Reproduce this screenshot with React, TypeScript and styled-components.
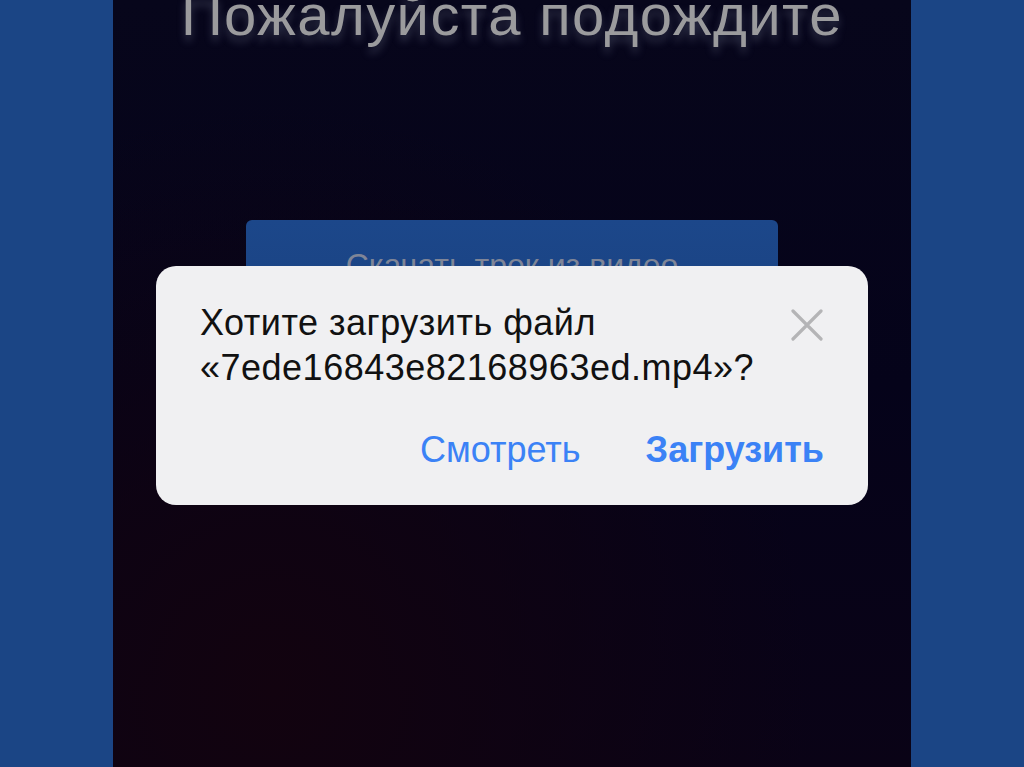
import React from "react";
import styled, { createGlobalStyle } from "styled-components";

const GlobalStyle = createGlobalStyle`
  html, body {
    margin: 0;
    padding: 0;
    background: #1b4585;
  }
`;

const Page = styled.div`
  width: 1024px;
  height: 767px;
  display: flex;
  justify-content: center;
  background: #1b4585;
  overflow: hidden;
`;

const Screen = styled.div`
  position: relative;
  width: 798px;
  height: 767px;
  display: flex;
  flex-direction: column;
  align-items: center;
  background: radial-gradient(
      ellipse at 20% 90%,
      #12030f 0%,
      rgba(18, 3, 15, 0) 60%
    ),
    linear-gradient(180deg, #07061b 0%, #05031a 50%, #0a0316 100%);
`;

const Title = styled.h1`
  margin: -18px 0 0;
  font-family: "Liberation Sans", Arial, sans-serif;
  font-weight: 400;
  font-size: 58px;
  line-height: 66px;
  letter-spacing: 1.4px;
  color: #9b9b9d;
  text-shadow: 0 6px 9px rgba(150, 160, 190, 0.3);
  white-space: nowrap;
`;

const ActionButton = styled.div`
  margin-top: 172px;
  width: 532px;
  height: 110px;
  box-sizing: border-box;
  padding-top: 27px;
  border-radius: 6px;
  background: linear-gradient(180deg, #1c478a 0%, #1a4281 100%);
  text-align: center;
  font-family: "Liberation Sans", Arial, sans-serif;
  font-size: 32px;
  line-height: 36px;
  color: #7f8597;
`;

const Dialog = styled.div`
  position: absolute;
  top: 266px;
  left: 43px;
  width: 712px;
  height: 239px;
  box-sizing: border-box;
  padding: 34px 44px 0 44px;
  border-radius: 20px;
  background: #f0f0f2;
  display: flex;
  flex-direction: column;
`;

const DialogHead = styled.div`
  display: flex;
  justify-content: space-between;
  align-items: flex-start;
`;

const Message = styled.div`
  font-family: "Liberation Sans", Arial, sans-serif;
  font-size: 36px;
  line-height: 45px;
  letter-spacing: 0.5px;
  color: #111;
`;

const CloseIcon = styled.svg`
  width: 32px;
  height: 32px;
  margin-top: 9px;
  margin-right: 1px;
`;

const Actions = styled.div`
  display: flex;
  justify-content: flex-end;
  gap: 65px;
  margin-top: 37px;
`;

const DialogButton = styled.span<{ $bold?: boolean }>`
  font-family: "Liberation Sans", Arial, sans-serif;
  font-size: 36px;
  line-height: 45px;
  font-weight: ${(p) => (p.$bold ? 700 : 400)};
  color: #3b82f6;
`;

const App = () => (
  <Page>
    <GlobalStyle />
    <Screen>
      <Title>Пожалуйста подождите</Title>
      <ActionButton>Скачать трек из видео</ActionButton>
      <Dialog>
        <DialogHead>
          <Message>
            Хотите загрузить файл
            <br />
            «7ede16843e82168963ed.mp4»?
          </Message>
          <CloseIcon viewBox="0 0 32 32">
            <path
              d="M2 2 L30 30 M30 2 L2 30"
              stroke="#b4b4b6"
              strokeWidth="3.2"
              strokeLinecap="round"
            />
          </CloseIcon>
        </DialogHead>
        <Actions>
          <DialogButton>Смотреть</DialogButton>
          <DialogButton $bold>Загрузить</DialogButton>
        </Actions>
      </Dialog>
    </Screen>
  </Page>
);

export default App;
